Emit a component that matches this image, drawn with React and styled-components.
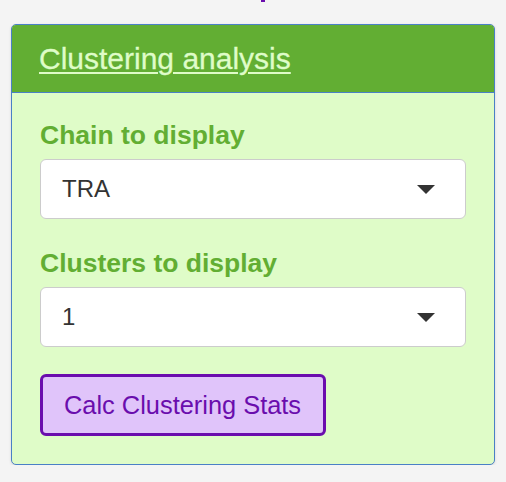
import React from 'react';
import styled, { createGlobalStyle } from 'styled-components';

const GlobalStyle = createGlobalStyle`
  body {
    margin: 0;
    background: #f4f4f4;
    font-family: "Liberation Sans", Arial, Helvetica, sans-serif;
  }
`;

const green = '#62ae33';
const paleGreen = '#dffcc8';
const purple = '#6a0dad';

const TitleStub = styled.div`
  height: 24px;
  display: flex;
  justify-content: center;
  padding-left: 20px;
`;

const TitleTail = styled.span`
  width: 4px;
  height: 2px;
  background: ${purple};
`;

const Panel = styled.section`
  margin: 0 11px;
  border: 1px solid #4a80c6;
  border-radius: 5px;
  background: ${paleGreen};
  box-shadow: 0 1px 3px rgba(0, 0, 0, 0.12);
  overflow: hidden;
`;

const Header = styled.div`
  background: ${green};
  border-bottom: 1px solid #4a80c6;
  padding: 17px 27px;
`;

const HeaderLink = styled.a`
  font-size: 30px;
  line-height: 33px;
  color: ${paleGreen};
  text-decoration: underline;
  text-decoration-thickness: 2px;
  text-underline-offset: 3px;
  -webkit-text-stroke: 0.3px ${paleGreen};
`;

const Body = styled.div`
  padding: 27px 28px 28px;
`;

const Group = styled.div`
  margin-bottom: ${p => p.$gap}px;
`;

const Label = styled.label`
  display: block;
  font-size: 26.5px;
  font-weight: bold;
  line-height: 31px;
  color: ${green};
  margin-bottom: 8px;
`;

const Select = styled.div`
  height: 58px;
  border: 1px solid #cccccc;
  border-radius: 6px;
  background: #ffffff;
  display: flex;
  align-items: center;
  justify-content: space-between;
  padding: 0 30px 0 21px;
  font-size: 24px;
  color: #333333;
`;

const Caret = styled.span`
  width: 0;
  height: 0;
  border-left: 9px solid transparent;
  border-right: 9px solid transparent;
  border-top: 9px solid #333333;
  margin-top: 1px;
`;

const Button = styled.button`
  height: 62px;
  padding: 0 22px 0 21px;
  border: 3px solid ${purple};
  border-radius: 6px;
  background: #e0c4fa;
  color: ${purple};
  font-family: inherit;
  font-size: 25.4px;
  line-height: 56px;
`;

const SelectInput = ({ label, value, gap }) => (
  <Group $gap={gap}>
    <Label>{label}</Label>
    <Select>
      <span>{value}</span>
      <Caret />
    </Select>
  </Group>
);

export default function App() {
  return (
    <>
      <GlobalStyle />
      <TitleStub>
        <TitleTail />
      </TitleStub>
      <Panel>
        <Header>
          <HeaderLink>Clustering analysis</HeaderLink>
        </Header>
        <Body>
          <SelectInput label="Chain to display" value="TRA" gap={29} />
          <SelectInput label="Clusters to display" value="1" gap={27} />
          <Button>Calc Clustering Stats</Button>
        </Body>
      </Panel>
    </>
  );
}
